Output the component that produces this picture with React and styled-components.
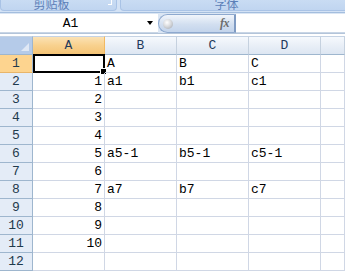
import React from "react";
import styled, { createGlobalStyle } from "styled-components";

const GlobalStyle = createGlobalStyle`
  html, body { margin: 0; padding: 0; background: #ffffff; overflow: hidden; }
  #root { width: 345px; height: 274px; overflow: hidden; }
`;

const CELL_FONT = `"Liberation Mono", "DejaVu Sans Mono", monospace`;

const Page = styled.div`
  width: 345px;
  height: 274px;
  display: flex;
  flex-direction: column;
  background: #ffffff;
`;

const Ribbon = styled.div`
  height: 13px;
  flex: none;
  display: flex;
  gap: 3px;
  background: #d3e2f5;
  border-bottom: 1px solid #a4bede;
  box-sizing: border-box;
  overflow: hidden;
`;

const Group = styled.div`
  position: relative;
  flex: ${(p) => (p.$grow ? "1" : "none")};
  width: ${(p) => (p.$width ? `${p.$width}px` : "auto")};
  height: 10px;
  margin-right: ${(p) => (p.$grow ? "-6px" : "0")};
  background: linear-gradient(#c9dcf3, #c0d5f0);
  border: 1px solid #a9c3e6;
  border-top: none;
  border-radius: 0 0 4px 4px;
  display: flex;
  align-items: flex-end;
  justify-content: center;
  overflow: hidden;
`;

const GroupLabel = styled.span`
  font-family: "Noto Sans CJK SC", "Noto Sans", sans-serif;
  font-size: 12px;
  line-height: 12px;
  height: 12px;
  margin-bottom: 0px;
  margin-left: ${(p) => p.$shift || 0}px;
  color: #5c7fb8;
  white-space: nowrap;
`;

const Launcher = styled.span`
  position: absolute;
  right: 4px;
  top: 0;
  width: 3px;
  height: 4px;
  border-right: 1px solid #ffffff;
  border-bottom: 1px solid #ffffff;
`;

const FormulaBar = styled.div`
  height: 21px;
  flex: none;
  display: flex;
  background: #dbe6f4;
  padding-top: 1px;
  box-sizing: border-box;
  border-bottom: 1px solid #b3c4d9;
`;

const NameBox = styled.div`
  width: 158px;
  height: 19px;
  flex: none;
  background: #ffffff;
  display: flex;
  align-items: center;
  box-sizing: border-box;
  border-bottom: 1px solid #c9d6e6;
`;

const NameText = styled.span`
  flex: 1;
  text-align: center;
  font-family: ${CELL_FONT};
  font-size: 13px;
  color: #000000;
  padding-left: 2px;
`;

const DropArrow = styled.span`
  width: 0;
  height: 0;
  margin-right: 5px;
  margin-left: 8px;
  border-left: 3px solid transparent;
  border-right: 3px solid transparent;
  border-top: 4px solid #000000;
`;

const FxButton = styled.div`
  width: 78px;
  height: 19px;
  flex: none;
  box-sizing: border-box;
  border: 1px solid #8ea9cf;
  border-right: 2px solid #7f9bc3;
  border-radius: 10px 0 0 10px;
  background: linear-gradient(#f1f5fb, #d2dff0 55%, #c3d4ec);
  display: flex;
  align-items: center;
  justify-content: space-between;
  padding: 0 5px 0 4px;
`;

const Orb = styled.span`
  width: 10px;
  height: 10px;
  border-radius: 50%;
  background: radial-gradient(circle at 40% 35%, #ffffff 0%, #d8dadd 45%, #9ea3aa 100%);
`;

const FxLabel = styled.span`
  font-family: "Liberation Serif", "DejaVu Serif", serif;
  font-style: italic;
  font-weight: bold;
  font-size: 12px;
  color: #6d6d6d;
  letter-spacing: -0.5px;
`;

const FormulaInput = styled.div`
  flex: 1;
  height: 19px;
  background: #ffffff;
  border-bottom: 1px solid #c9d6e6;
  box-sizing: border-box;
`;

const Strip = styled.div`
  height: 2px;
  flex: none;
  background: #ffffff;
`;

const Sheet = styled.div`
  flex: 1;
  display: grid;
  grid-template-columns: 33px repeat(4, 72px) 1fr;
  grid-template-rows: 19px;
  grid-auto-rows: 18px;
  overflow: hidden;
  align-content: start;
`;

const Corner = styled.div`
  position: relative;
  background: #b5cbe9;
  border-right: 1px solid #9eb6ce;
  border-bottom: 1px solid #9eb6ce;
  border-top: 1px solid #c5d3e4;
  box-sizing: border-box;
  overflow: hidden;
  &::after {
    content: "";
    position: absolute;
    right: 3px;
    bottom: 3px;
    width: 0;
    height: 0;
    border-left: 8px solid transparent;
    border-bottom: 8px solid #dfe8f5;
  }
`;

const ColHead = styled.div`
  box-sizing: border-box;
  border-top: 1px solid #c5d3e4;
  border-right: 1px solid ${(p) => (p.$sel ? "#f1b962" : "#c5d1df")};
  border-bottom: 1px solid ${(p) => (p.$sel ? "#f2b24d" : "#9eb6ce")};
  background: ${(p) =>
    p.$sel
      ? "linear-gradient(#fbe2b5, #f8d18e 50%, #f5c476)"
      : "linear-gradient(#f6f9fd, #e9eff7 50%, #dde6f2)"};
  font-family: ${CELL_FONT};
  font-size: 13px;
  color: #1f3a5c;
  display: flex;
  align-items: center;
  justify-content: center;
`;

const RowHead = styled.div`
  box-sizing: border-box;
  border-right: 1px solid #9eb6ce;
  border-bottom: 1px solid ${(p) => (p.$sel ? "#e8b56a" : "#9eb6ce")};
  background: ${(p) => (p.$sel ? "#fdd48f" : "#e4ecf7")};
  font-family: ${CELL_FONT};
  font-size: 13px;
  color: #1f3a4c;
  display: flex;
  align-items: center;
  justify-content: center;
`;

const Cell = styled.div`
  position: relative;
  box-sizing: border-box;
  border-right: 1px solid #d0d7e5;
  border-bottom: 1px solid #d0d7e5;
  font-family: ${CELL_FONT};
  font-size: 13px;
  color: #000000;
  display: flex;
  align-items: center;
  justify-content: ${(p) => (p.$num ? "flex-end" : "flex-start")};
  padding: 0 2px 0 2px;
  white-space: nowrap;
`;

const Selection = styled.div`
  position: absolute;
  left: 0;
  top: -1px;
  right: -1px;
  bottom: -1px;
  border: 2px solid #000000;
  pointer-events: none;
`;

const FillHandle = styled.div`
  position: absolute;
  right: -4px;
  bottom: -4px;
  width: 5px;
  height: 5px;
  background: #000000;
  border: 1px solid #ffffff;
`;

const rows = [
  ["", "A", "B", "C"],
  ["1", "a1", "b1", "c1"],
  ["2", "", "", ""],
  ["3", "", "", ""],
  ["4", "", "", ""],
  ["5", "a5-1", "b5-1", "c5-1"],
  ["6", "", "", ""],
  ["7", "a7", "b7", "c7"],
  ["8", "", "", ""],
  ["9", "", "", ""],
  ["10", "", "", ""],
  ["", "", "", ""],
];

export default function App() {
  return (
    <Page>
      <GlobalStyle />
      <Ribbon>
        <Group $width={115}>
          <GroupLabel $shift={-14}>剪贴板</GroupLabel>
          <Launcher />
        </Group>
        <Group $grow>
          <GroupLabel $shift={-18}>字体</GroupLabel>
        </Group>
      </Ribbon>
      <FormulaBar>
        <NameBox>
          <NameText>A1</NameText>
          <DropArrow />
        </NameBox>
        <FxButton>
          <Orb />
          <FxLabel>fx</FxLabel>
        </FxButton>
        <FormulaInput />
      </FormulaBar>
      <Strip />
      <Sheet>
        <Corner />
        {["A", "B", "C", "D", ""].map((c, i) => (
          <ColHead key={i} $sel={i === 0}>
            {c}
          </ColHead>
        ))}
        {rows.map((r, ri) => (
          <React.Fragment key={ri}>
            <RowHead $sel={ri === 0}>{ri + 1}</RowHead>
            <Cell $num>
              {r[0]}
              {ri === 0 && (
                <Selection>
                  <FillHandle />
                </Selection>
              )}
            </Cell>
            <Cell>{r[1]}</Cell>
            <Cell>{r[2]}</Cell>
            <Cell>{r[3]}</Cell>
            <Cell />
          </React.Fragment>
        ))}
      </Sheet>
    </Page>
  );
}
